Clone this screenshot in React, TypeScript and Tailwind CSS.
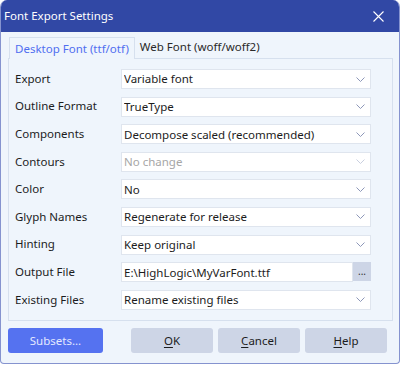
import { ReactNode } from 'react';

const font = { fontFamily: '"Noto Sans", "Open Sans", sans-serif' };

const Chevron = ({ light }: { light?: boolean }) => (
  <svg width="9" height="5" viewBox="0 0 9 5" className="shrink-0">
    <path d="M0.5 0.5 L4.5 4.5 L8.5 0.5" fill="none" stroke={light ? '#c9cfdf' : '#8d97b8'} strokeWidth="1" />
  </svg>
);

const Combo = ({ value, disabled }: { value: string; disabled?: boolean }) => (
  <div className="flex items-center h-[20px] w-[250px] bg-white border border-[#dfe5ee] pl-[2px] pr-[5px]">
    <span className={`flex-1 truncate ${disabled ? 'text-[#a6a6a6]' : 'text-[#1c1c1c]'}`}>{value}</span>
    <Chevron light={disabled} />
  </div>
);

const rows: { label: string; value: string; disabled?: boolean; file?: boolean }[] = [
  { label: 'Export', value: 'Variable font' },
  { label: 'Outline Format', value: 'TrueType' },
  { label: 'Components', value: 'Decompose scaled (recommended)' },
  { label: 'Contours', value: 'No change', disabled: true },
  { label: 'Color', value: 'No' },
  { label: 'Glyph Names', value: 'Regenerate for release' },
  { label: 'Hinting', value: 'Keep original' },
  { label: 'Output File', value: 'E:\\HighLogic\\MyVarFont.ttf', file: true },
  { label: 'Existing Files', value: 'Rename existing files' },
];

const Btn = ({ children, primary, w }: { children: ReactNode; primary?: boolean; w: string }) => (
  <button
    className={`${w} h-[25px] rounded-[3px] flex items-center justify-center text-[11.5px] ${
      primary ? 'bg-[#5572f0] text-[#e4e9ff]' : 'bg-[#cdd5e6] text-[#1c1c1c]'
    }`}
  >
    {children}
  </button>
);

export default function App() {
  return (
    <div className="w-[400px] h-[366px] bg-white" style={font}>
      <div className="h-[364px] flex flex-col bg-[#eff5fc] rounded-t-[7px] rounded-b-[4px] overflow-hidden border-x border-b border-[#8593cf]">
        <div className="h-[32px] shrink-0 bg-[#3148a5] flex items-center justify-between pl-[4px] pr-[16px] -mx-px text-white">
          <span className="text-[11.5px]">Font Export Settings</span>
          <svg width="11" height="11" viewBox="0 0 11 11">
            <path d="M0.5 0.5 L10.5 10.5 M10.5 0.5 L0.5 10.5" stroke="white" strokeWidth="1.1" />
          </svg>
        </div>

        <div className="flex flex-col px-[7px] pt-[4px] text-[11.5px]">
          <div className="flex h-[22px] items-end">
            <div className="h-[22px] px-[5px] flex items-center border-x border-t border-[#d6e0ee] bg-[#eff5fc] text-[#4f6ef0] ml-[1px] relative top-px">
              Desktop Font (ttf/otf)
            </div>
            <div className="h-[22px] px-[5px] flex items-center text-[#2a2a2a]">Web Font (woff/woff2)</div>
          </div>

          <div className="h-[263px] w-[385px] border border-[#d6e0ee] pt-[10px] pl-[6px] flex flex-col gap-[7.6px]">
            {rows.map((r) => (
              <div key={r.label} className="flex items-center h-[20px]">
                <span className="w-[106px] text-[#1c1c1c] -mt-[1px]">{r.label}</span>
                {r.file ? (
                  <div className="flex h-[20px] w-[250px]">
                    <div className="flex-1 flex items-center bg-white border border-[#dfe5ee] pl-[2px] text-[#1c1c1c]">
                      {r.value}
                    </div>
                    <div className="w-[18px] h-[19px] bg-[#cdd5e6] flex items-center justify-center text-[10px] leading-none text-[#333] pb-[2px]">
                      ...
                    </div>
                  </div>
                ) : (
                  <Combo value={r.value} disabled={r.disabled} />
                )}
              </div>
            ))}
          </div>

          <div className="flex mt-[7px] gap-[5px]">
            <Btn primary w="w-[95px] mr-[23px]">
              Subsets...
            </Btn>
            <Btn w="w-[82px]">
              <span className="underline underline-offset-2">O</span>K
            </Btn>
            <Btn w="w-[82px]">
              <span className="underline underline-offset-2">C</span>ancel
            </Btn>
            <Btn w="w-[82px]">
              <span className="underline underline-offset-2">H</span>elp
            </Btn>
          </div>
        </div>
      </div>
    </div>
  );
}
